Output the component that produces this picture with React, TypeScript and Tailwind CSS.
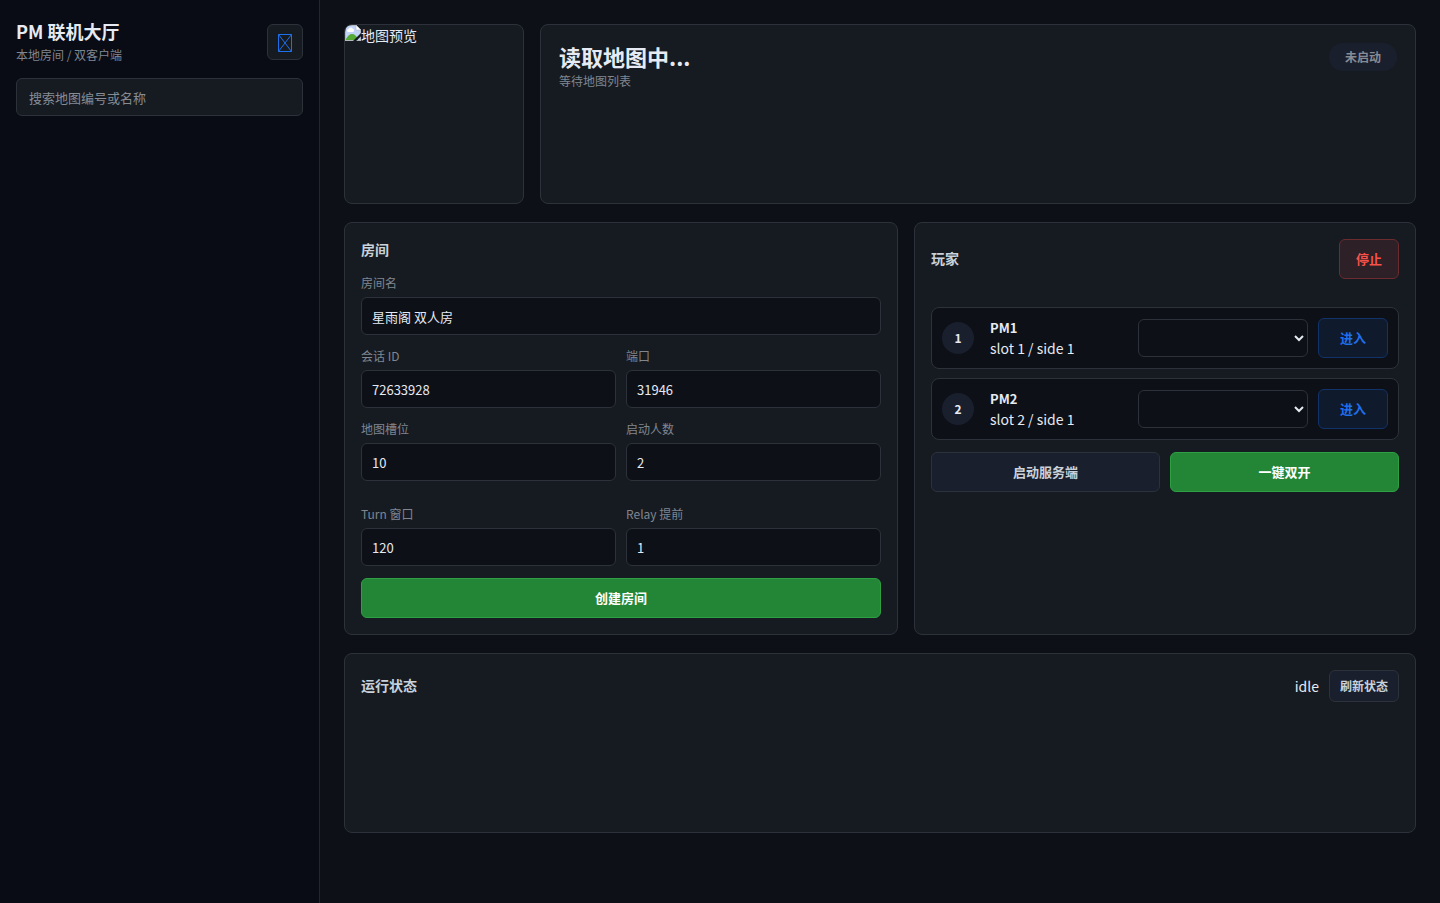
import { useState } from "react";
import clsx from "clsx";

const players = [
  { id: 1, name: "PM1", detail: "slot 1 / side 1" },
  { id: 2, name: "PM2", detail: "slot 2 / side 1" },
];

const initialRoom = {
  name: "星雨阁 双人房",
  session: "72633928",
  port: "31946",
  slot: "10",
  count: "2",
  turn: "120",
  relay: "1",
};

type RoomKey = keyof typeof initialRoom;

function Panel({ className, children }: { className?: string; children: React.ReactNode }) {
  return (
    <section className={clsx("rounded-lg border border-[#2d3139] bg-[#161b22]", className)}>
      {children}
    </section>
  );
}

function PanelTitle({ children }: { children: React.ReactNode }) {
  return <h2 className="pb-0.5 text-sm leading-[21px] font-bold text-[#c9d1d9]">{children}</h2>;
}

function Button({ className, children }: { className?: string; children: React.ReactNode }) {
  return (
    <button
      type="button"
      className={clsx("h-10 rounded-md border text-[13px] font-bold transition hover:brightness-110", className)}
    >
      {children}
    </button>
  );
}

function Field({
  id,
  label,
  value,
  onChange,
}: {
  id: string;
  label: string;
  value: string;
  onChange: (value: string) => void;
}) {
  return (
    <div className="min-w-0">
      <label htmlFor={id} className="mb-[5px] block text-xs leading-[18px] text-[#808690]">
        {label}
      </label>
      <input
        id={id}
        value={value}
        onChange={(e) => onChange(e.target.value)}
        className="h-[38px] w-full rounded-md border border-[#2d3139] bg-[#0d1017] px-2.5 text-[13px] text-[#e6eaf2] outline-none focus:border-[#1f6feb]"
      />
    </div>
  );
}

function BrokenImageIcon() {
  return (
    <svg width="16" height="16" viewBox="0 0 16 16" className="shrink-0" aria-hidden="true">
      <path d="M0 0h11l5 5v11H0z" fill="#b4b8c0" />
      <path d="M1 1h10l4 4v10H1z" fill="#c1d3f6" />
      <path d="M3.5 7a1.500 1.500 0 0 1 0-3 2.300 2.300 0 0 1 4.300-.2A1.700 1.700 0 0 1 8 7z" fill="#fff" />
      <path d="M1 15v-1c1.500-3 3.500-5 6-5s4.500 2 6 5v1z" fill="#55ab35" />
      <path d="M11 0l5 5h-5z" fill="#fff" stroke="#b4b8c0" strokeWidth=".6" />
      <path d="M16 8v3.200L11.200 16H8z" fill="#161b22" />
    </svg>
  );
}

function Sidebar() {
  const [query, setQuery] = useState("");

  return (
    <aside className="border-r border-[#22272f] bg-[#090c14] px-4 py-5">
      <div className="mb-3.5 flex items-center justify-between">
        <div>
          <h1 className="text-lg leading-[22px] font-bold text-[#e6eaf2]">PM 联机大厅</h1>
          <p className="mt-1 text-xs leading-[18px] text-[#808690]">本地房间 / 双客户端</p>
        </div>
        <button
          type="button"
          aria-label="刷新"
          className="flex size-9 items-center justify-center rounded-md border border-[#2d3139] bg-[#161b22] text-[#1f6feb]"
        >
          <svg width="14" height="20" viewBox="0 0 14 20" fill="none" stroke="currentColor" aria-hidden="true">
            <path d="M.5 2.500h13v17H.5zM.5 2.500l13 17M13.500 2.500l-13 17" />
          </svg>
        </button>
      </div>
      <input
        type="search"
        aria-label="搜索地图编号或名称"
        placeholder="搜索地图编号或名称"
        value={query}
        onChange={(e) => setQuery(e.target.value)}
        className="h-[38px] w-full rounded-md border border-[#2d3139] bg-[#161b22] px-3 text-[13px] text-[#e6eaf2] outline-none placeholder:text-[#868b94] focus:border-[#1f6feb]"
      />
    </aside>
  );
}

function RoomPanel() {
  const [room, setRoom] = useState(initialRoom);

  const field = (key: RoomKey, label: string) => (
    <Field
      id={`room-${key}`}
      label={label}
      value={room[key]}
      onChange={(value) => setRoom({ ...room, [key]: value })}
    />
  );

  return (
    <Panel className="flex flex-col gap-3 p-4">
      <PanelTitle>房间</PanelTitle>
      {field("name", "房间名")}
      <div className="grid grid-cols-2 gap-x-2.5 gap-y-3">
        {field("session", "会话 ID")}
        {field("port", "端口")}
        {field("slot", "地图槽位")}
        {field("count", "启动人数")}
      </div>
      <div className="mt-3 grid grid-cols-2 gap-2.5">
        {field("turn", "Turn 窗口")}
        {field("relay", "Relay 提前")}
      </div>
      <Button className="border-[#2ea043] bg-[#238636] text-white">创建房间</Button>
    </Panel>
  );
}

function PlayersPanel() {
  return (
    <Panel className="p-4">
      <div className="mb-7 flex items-center justify-between">
        <PanelTitle>玩家</PanelTitle>
        <Button className="border-[#6b2b2f] bg-[#2d2026] px-4 text-[#f85149]">停止</Button>
      </div>
      <ul className="flex flex-col gap-[9px]">
        {players.map((player) => (
          <li
            key={player.id}
            className="grid grid-cols-[38px_1fr_170px_70px] items-center gap-2.5 rounded-lg border border-[#2d3139] bg-[#0d1017] p-2.5"
          >
            <span className="flex size-8 items-center justify-center rounded-full bg-[#1a1f2e] text-xs font-bold text-[#e6eaf2]">
              {player.id}
            </span>
            <div className="min-w-0 text-sm leading-5 text-[#e6eaf2]">
              <strong className="block text-[13px] leading-5">{player.name}</strong>
              <span>{player.detail}</span>
            </div>
            <select
              aria-label={`${player.name} 角色`}
              className="h-[38px] w-full rounded-md border border-[#2d3139] bg-[#0d1017] px-2.5 text-[13px] text-[#e6eaf2]"
            />
            <Button className="border-[#12336a] bg-[#0f1a2c] text-[#1f6feb]">进入</Button>
          </li>
        ))}
      </ul>
      <div className="mt-3 grid grid-cols-2 gap-2.5">
        <Button className="border-[#2d3139] bg-[#1a1f2e] text-[#c9d1d9]">启动服务端</Button>
        <Button className="border-[#2ea043] bg-[#238636] text-white">一键双开</Button>
      </div>
    </Panel>
  );
}

export default function App() {
  return (
    <div className="grid min-h-screen grid-cols-[320px_1fr] bg-[#0d1017] font-['Noto_Sans_CJK_SC',sans-serif] text-sm text-[#e6eaf2]">
      <Sidebar />
      <main className="flex min-w-0 flex-col gap-[18px] p-6">
        <div className="grid grid-cols-[180px_1fr] gap-4">
          <div
            role="img"
            aria-label="地图预览"
            className="flex h-[180px] items-start overflow-hidden rounded-lg border border-[#2d3139] bg-[#161b22]"
          >
            <BrokenImageIcon />
            <span className="leading-5">地图预览</span>
          </div>
          <Panel className="flex items-start justify-between p-[18px]">
            <div>
              <h2 className="text-[22px] leading-[26px] font-bold">读取地图中...</h2>
              <p className="mt-1 text-xs leading-4 text-[#808690]">等待地图列表</p>
            </div>
            <span className="rounded-full bg-[#1a1f2e] px-4 text-xs leading-7 font-bold text-[#868b94]">未启动</span>
          </Panel>
        </div>

        <div className="grid grid-cols-[554fr_502fr] gap-4">
          <RoomPanel />
          <PlayersPanel />
        </div>

        <Panel className="min-h-[180px] p-4">
          <div className="flex items-center justify-between">
            <PanelTitle>运行状态</PanelTitle>
            <div className="flex items-center gap-2.5">
              <span>idle</span>
              <button
                type="button"
                className="h-8 rounded-md border border-[#2d3139] bg-[#1a1f2e] px-2.5 text-xs font-bold text-[#c9d1d9]"
              >
                刷新状态
              </button>
            </div>
          </div>
        </Panel>
      </main>
    </div>
  );
}
